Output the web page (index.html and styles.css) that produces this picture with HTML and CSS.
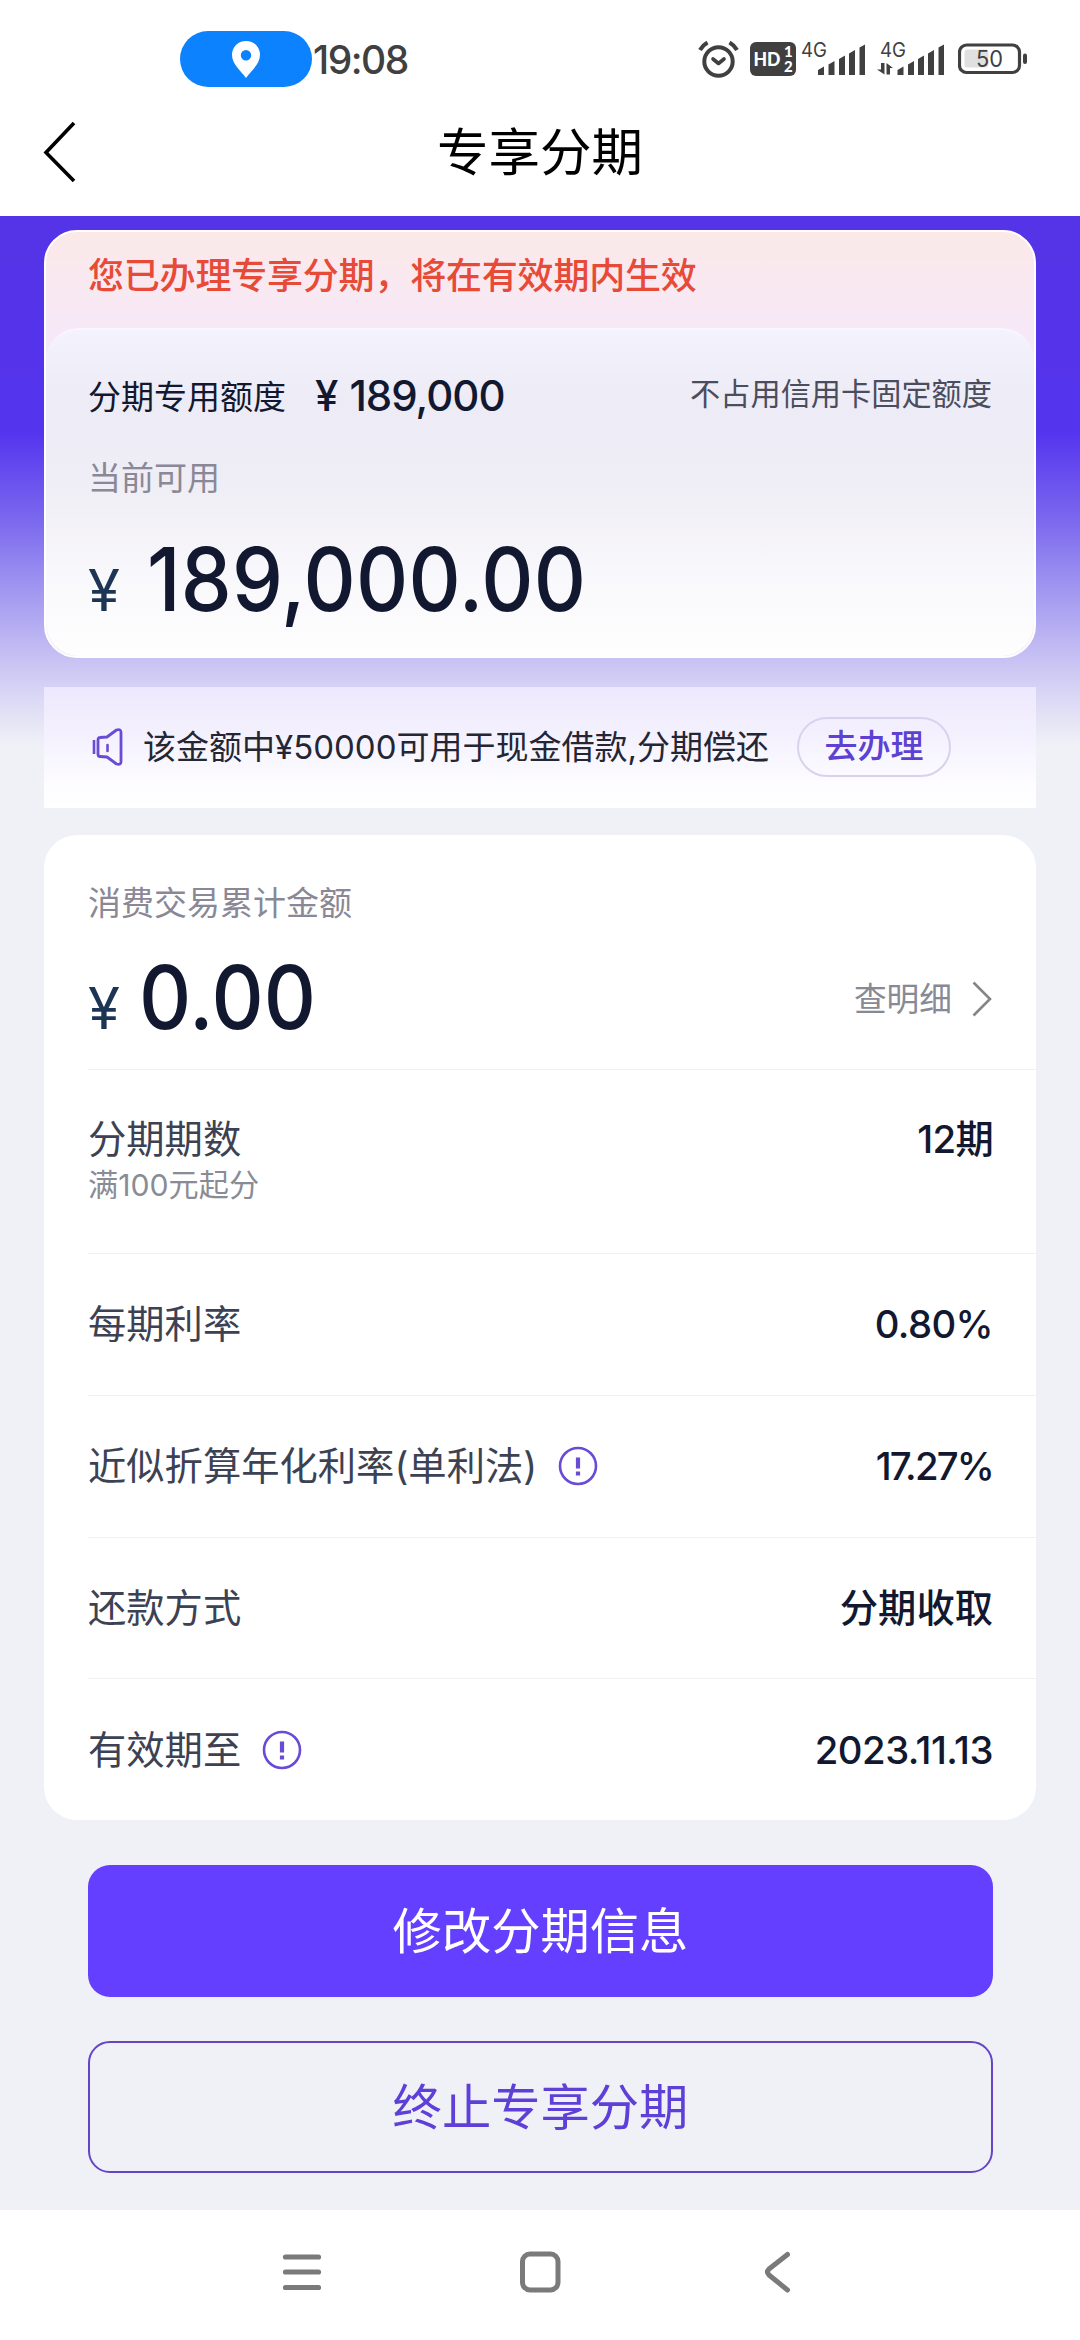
FILE: index.html
```html
<!DOCTYPE html>
<html lang="zh-CN">
<head>
<meta charset="utf-8">
<title>专享分期</title>
<link rel="stylesheet" href="styles.css">
</head>
<body>
<div class="screen">
  <header class="top">
    <div class="status">
      <span class="pill">
        <svg width="28" height="37" viewBox="0 0 28 37"><path fill="#fff" fill-rule="evenodd" d="M14 0C6 0 0 6 0 14c0 9 9 16 14 23 5-7 14-14 14-23C28 6 22 0 14 0zm0 9a5.2 5.2 0 1 1 0 10.400a5.200 5.200 0 0 1 0-10.400z"/></svg>
      </span>
      <span class="clock">19:08</span>
      <span class="status-icons">
        <svg class="alarm" width="42" height="40" viewBox="0 0 42 40" fill="none" stroke="#404040" stroke-linecap="round" stroke-linejoin="round"><circle cx="20.500" cy="22.500" r="14.200" stroke-width="4"/><path d="M15 20l5.500 4.500L26 20" stroke-width="3.600"/><path d="M2 11Q5 6 9.500 3.500M39 11Q36 6 31.500 3.500" stroke-width="4.200" stroke-linecap="butt"/></svg>
        <svg class="hd" width="46" height="34" viewBox="0 0 46 34"><rect width="46" height="34" rx="6" fill="#404040"/><g fill="#fff" font-family="Lato, sans-serif" font-weight="900"><text x="3.500" y="24" font-size="19.500" textLength="27" lengthAdjust="spacingAndGlyphs">HD</text><text x="34" y="15" font-size="15">1</text><text x="34" y="30" font-size="15">2</text></g></svg>
        <svg class="signal" width="64" height="48" viewBox="0 -6 64 48" fill="#404040"><text x="0" y="16" font-family="Inter, sans-serif" font-size="20" textLength="26" lengthAdjust="spacingAndGlyphs">4G</text><path d="M17 29l6-3.500v8.500h-6zM27.500 23.500l6-3.500v14h-6zM38 18l6-3.500V34h-6zM48 12.500L54 9v25h-6zM58.500 6.500l5.500-3v30.500h-5.500z"/></svg>
        <svg class="signal signal-data" width="67" height="48" viewBox="0 -6 67 48" fill="#404040"><text x="3" y="16" font-family="Inter, sans-serif" font-size="20" textLength="26" lengthAdjust="spacingAndGlyphs">4G</text><path d="M20.500 29l6-3.500v8.500h-6zM31 23.500l6-3.500v14h-6zM41 18l6-3.500V34h-6zM51 12.500L57 9v25h-6zM61.500 6.500l5.500-3v30.500h-5.500zM4 22h3.500v11.500L0 28.500h4zM9.500 22l6.500 5h-3v6.500H9.500z"/></svg>
        <svg class="battery" width="70" height="32" viewBox="0 0 70 32"><rect x="1.500" y="2" width="60" height="27.500" rx="7" fill="none" stroke="#404040" stroke-width="3.200"/><rect x="6.500" y="6.500" width="24" height="18" rx="3" fill="#e0e0e0"/><text x="18" y="23.500" font-family="Inter, sans-serif" font-size="22.500" fill="#404040" textLength="27" lengthAdjust="spacingAndGlyphs">50</text><rect x="65" y="10.500" width="4" height="10.500" rx="2" fill="#404040"/></svg>
      </span>
    </div>
    <div class="titlebar">
      <svg class="back" width="34" height="62" viewBox="0 0 34 62" fill="none" stroke="#000" stroke-width="3.600"><path d="M31 2L3 31.500 31 60"/></svg>
      <h1>专享分期</h1>
    </div>
  </header>

  <main>
    <section class="quota">
      <p class="quota-notice">您已办理专享分期，将在有效期内生效</p>
      <div class="quota-body">
        <div class="quota-head">
          <span class="quota-label">分期专用额度</span>
          <span class="quota-total"><span class="yen">¥</span>189,000</span>
          <span class="quota-tip">不占用信用卡固定额度</span>
        </div>
        <p class="sub-label">当前可用</p>
        <p class="amount"><span class="yen">¥</span><span class="figure figure-main">189,000.00</span></p>
      </div>
    </section>

    <section class="cash">
      <svg width="32" height="38" viewBox="0 0 32 38" fill="none" stroke="#6a4bd6" stroke-linejoin="round" stroke-linecap="round"><path d="M8 9.500q-2 0-2 2.500v14q0 2.500 2 2.500l7 .5 9.500 7q4.500 1.500 4.500-2.500v-29Q29 .5 24.500 2L15 9z" stroke-width="2.800"/><path d="M15.500 17v6" stroke-width="2.600"/><path d="M2 12v14" stroke-width="2.600" stroke-linecap="butt"/></svg>
      <span class="cash-text">该金额中¥50000可用于现金借款,分期偿还</span>
      <a class="cash-btn">去办理</a>
    </section>

    <section class="detail">
      <div class="spent">
        <p class="sub-label">消费交易累计金额</p>
        <div class="spent-row">
          <p class="amount"><span class="yen">¥</span><span class="figure figure-spent">0.00</span></p>
          <a class="more">查明细<svg width="20" height="36" viewBox="0 0 20 36" fill="none" stroke="#858585" stroke-width="2.600"><path d="M1.500 1.500L18 18 1.500 34.500"/></svg></a>
        </div>
      </div>
      <div class="row row-tall">
        <div class="row-label"><span>分期期数</span><small>满100元起分</small></div>
        <span class="value v-term">12期</span>
      </div>
      <div class="row">
        <span class="row-label">每期利率</span>
        <span class="value v-rate">0.80%</span>
      </div>
      <div class="row">
        <span class="row-label">近似折算年化利率(单利法)</span>
        <svg class="info" width="40" height="40" viewBox="0 0 40 40"><circle cx="20" cy="20" r="18" fill="none" stroke="#6a4bd6" stroke-width="2.600"/><path d="M20 11.500v11M20 25.500v4" stroke="#6a4bd6" stroke-width="4.200"/></svg>
        <span class="value v-year">17.27%</span>
      </div>
      <div class="row">
        <span class="row-label">还款方式</span>
        <span class="value v-mode">分期收取</span>
      </div>
      <div class="row">
        <span class="row-label">有效期至</span>
        <svg class="info" width="40" height="40" viewBox="0 0 40 40"><circle cx="20" cy="20" r="18" fill="none" stroke="#6a4bd6" stroke-width="2.600"/><path d="M20 11.500v11M20 25.500v4" stroke="#6a4bd6" stroke-width="4.200"/></svg>
        <span class="value v-date">2023.11.13</span>
      </div>
    </section>

    <div class="actions">
      <button class="btn btn-primary">修改分期信息</button>
      <button class="btn btn-outline">终止专享分期</button>
    </div>
  </main>

  <nav class="navbar">
    <svg width="44" height="44" viewBox="0 0 44 44" stroke="#7a7a7a" stroke-width="5.200" stroke-linecap="round"><path d="M5.500 7h33M5.500 22h33M5.500 37.500h33"/></svg>
    <svg width="44" height="44" viewBox="0 0 44 44"><rect x="4.500" y="4" width="35.500" height="36" rx="7.500" fill="none" stroke="#7a7a7a" stroke-width="5"/></svg>
    <svg width="44" height="44" viewBox="0 0 44 44" fill="none" stroke="#7a7a7a" stroke-width="5" stroke-linecap="round" stroke-linejoin="round"><path d="M31.500 4.500L13 19q-3 3 0 6l18.500 15"/></svg>
  </nav>
</div>
</body>
</html>
```

FILE: styles.css
```css
* { box-sizing: border-box; }

body, h1, p { margin: 0; }

body {
  width: 1080px;
  height: 2340px;
  overflow: hidden;
  background: #f0f1f7;
  color: #11182f;
  font-family: Inter, "Noto Sans CJK SC", sans-serif;
  font-size: 33px;
  white-space: nowrap;
}

svg { display: block; flex: none; }

.screen {
  display: flex;
  flex-direction: column;
  height: 2340px;
}

/* ---- status bar and title ---- */
.top { height: 216px; background: #fff; }

.status {
  display: flex;
  align-items: center;
  height: 118px;
  padding: 0 52px 0 180px;
}

.pill {
  display: flex;
  align-items: center;
  justify-content: center;
  width: 132px;
  height: 56px;
  border-radius: 28px;
  background: #0c82ff;
}

.clock {
  margin-left: 1px;
  color: #404040;
  font-size: 39px;
  font-weight: 500;
  letter-spacing: -1.500px;
}

.status-icons {
  display: flex;
  align-items: center;
  margin-left: auto;
}

.hd { margin-left: 10px; }
.signal { margin-left: 5px; }
.signal-data { margin-left: 12px; }
.battery { margin-left: 14px; }

.titlebar {
  display: grid;
  grid-template-columns: 1fr auto 1fr;
  align-items: center;
  height: 68px;
}

.back { margin-left: 43px; }

h1 {
  color: #000;
  font-size: 51.500px;
  font-weight: 400;
  line-height: 68px;
}

/* ---- content ---- */
main {
  height: 1994px;
  padding: 14px 44px 0;
  background: linear-gradient(#5533e6 0, #5434ee 215px, #7966ee 300px, #9f94f0 370px, #c8c3f3 445px, #dcdaf5 485px, #f0f1f7 530px);
}

.quota {
  height: 428px;
  overflow: hidden;
  border: 2px solid #fff;
  border-radius: 33px;
  background: linear-gradient(#fbe9e8, #f7e8f8 100px);
}

.quota-notice {
  height: 96px;
  padding-left: 42px;
  color: #e84a38;
  font-size: 36px;
  font-weight: 500;
  letter-spacing: -0.200px;
  line-height: 88px;
}

.quota-body {
  height: 328px;
  padding: 0 42px;
  border-top: 2px solid #f8f6fe;
  border-radius: 33px;
  background: linear-gradient(#f4f2fd 0, #edebf5 70px, #efedf5 150px, #f8f7fb 240px, #fefefe);
}

.quota-head {
  display: flex;
  align-items: center;
  height: 130px;
}

.quota-total {
  margin-left: 29px;
  font-size: 42px;
  font-weight: 500;
  letter-spacing: -1px;
}

.quota-total .yen { margin-right: 12px; }

.quota-tip {
  margin-left: auto;
  color: #4a4d5e;
  font-size: 30.200px;
  line-height: 42px;
  padding-bottom: 2px;
}

.sub-label {
  color: #8a8896;
  font-size: 33px;
  line-height: 40px;
}

.quota-body .sub-label { margin-top: -2px; }

.amount {
  display: flex;
  align-items: baseline;
  line-height: 100px;
}

.amount .yen {
  width: 50px;
  color: #1c3554;
  font-size: 58px;
}

.quota-body .amount { margin-top: 31px; }

.figure {
  font-size: 88px;
  font-weight: 500;
  transform: scaleX(0.92);
  transform-origin: left;
}

.figure-main { margin-left: 9px; letter-spacing: 0.200px; }
.figure-spent { margin-left: 1px; }

.cash {
  display: flex;
  align-items: center;
  height: 121px;
  margin-top: 29px;
  padding: 0 48px 2px;
  background: linear-gradient(#ede8fd, #f4f1fe 40%, #fdfcff 80%, #fff);
}

.cash-text {
  margin-left: 19px;
  padding-bottom: 3px;
  color: #252633;
}

.cash-btn {
  width: 154px;
  height: 60px;
  margin-left: 28px;
  border: 2px solid #d8d2ee;
  border-radius: 30px;
  color: #5e40d2;
  font-weight: 500;
  line-height: 55px;
  text-align: center;
}

/* ---- plan details ---- */
.detail {
  height: 985px;
  margin-top: 27px;
  padding-left: 44px;
  border-radius: 33px;
  background: #fff;
}

.spent {
  height: 234px;
  padding: 48px 44px 0 0;
}

.spent-row {
  display: flex;
  align-items: center;
  justify-content: space-between;
  margin-top: 24px;
}

.more {
  display: flex;
  align-items: center;
  gap: 20px;
  padding-bottom: 7px;
  color: #878994;
  font-size: 32.700px;
  line-height: 40px;
}

.row {
  display: flex;
  align-items: center;
  height: 141.800px;
  padding-right: 43px;
  border-top: 1px solid #f0f0f4;
}

.row-tall {
  align-items: flex-start;
  height: 184px;
  padding-top: 44px;
}

.row-label {
  color: #3c4253;
  font-size: 38.300px;
  line-height: 50px;
}

.row-label span,
.row-label small { display: block; }

.row-label small {
  color: #898c96;
  font-size: 30.200px;
  line-height: 42px;
}

.info { margin-left: 21px; }

.value {
  margin-left: auto;
  font-size: 38.300px;
  font-weight: 500;
  line-height: 50px;
}

.v-term { letter-spacing: -0.700px; }
.v-rate { letter-spacing: -0.600px; }
.v-year { letter-spacing: -1.800px; }
.v-date { letter-spacing: -0.500px; }

/* ---- buttons ---- */
.actions {
  display: flex;
  flex-direction: column;
  gap: 44px;
  padding: 45px 43px 0 44px;
}

.btn {
  height: 132px;
  padding: 0 0 7px;
  border: 0;
  border-radius: 22px;
  font-family: inherit;
  font-size: 49.300px;
}

.btn-primary { background: #643fff; color: #fff; }

.btn-outline {
  border: 2px solid #6545c4;
  background: transparent;
  color: #5e40d8;
}

/* ---- system navigation ---- */
.navbar {
  display: flex;
  justify-content: center;
  gap: 194px;
  height: 130px;
  padding-top: 40px;
  background: #fff;
}
```
